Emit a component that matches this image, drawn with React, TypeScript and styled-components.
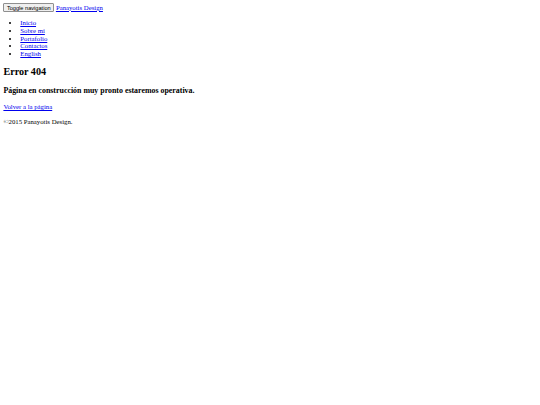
import styled, { createGlobalStyle } from 'styled-components';

// The reference is the unstyled page photographed at ~0.42 scale,
// so every default size below is scaled down by that factor.
const GlobalStyle = createGlobalStyle`
  body {
    margin: 3.4px;
    background: #fff;
    color: #000;
    font-family: "Liberation Serif", "Times New Roman", serif;
    font-size: 6.75px;
    line-height: 7.76px;
  }
`;

const NavHeader = styled.div`
  display: flex;
  align-items: center;
  gap: 1.7px;
  height: 8.9px;
`;

const ToggleButton = styled.button`
  font-family: "Liberation Sans", Arial, sans-serif;
  font-size: 5.63px;
  line-height: 6.5px;
  padding: 0.4px 2.5px;
  margin: 0;
  border: 1px solid #8f8f8f;
  border-radius: 1px;
  background: #efefef;
  color: #000;
`;

const Link = styled.a`
  color: #0000ee;
  text-decoration: underline;
`;

const Menu = styled.ul`
  margin: 6.75px 0;
  padding-left: 16.9px;
  list-style: disc;
`;

const Title = styled.h2`
  font-size: 10.13px;
  line-height: 11.65px;
  font-weight: bold;
  margin: 8.4px 0;
`;

const Subtitle = styled.h3`
  font-size: 7.9px;
  line-height: 9.08px;
  font-weight: bold;
  margin: 7.9px 0;
`;

const Paragraph = styled.p`
  margin: 6.75px 0;
`;

const menuItems = ['Inicio', 'Sobre mí', 'Portafolio', 'Contactos', 'English'];

export default function App() {
  return (
    <>
      <GlobalStyle />
      <nav>
        <NavHeader>
          <ToggleButton type="button">Toggle navigation</ToggleButton>
          <Link href="#">Panayotis Design</Link>
        </NavHeader>
        <Menu>
          {menuItems.map((item) => (
            <li key={item}>
              <Link href="#">{item}</Link>
            </li>
          ))}
        </Menu>
      </nav>
      <main>
        <Title>Error 404</Title>
        <Subtitle>Página en construcción muy pronto estaremos operativa.</Subtitle>
        <Paragraph>
          <Link href="#">Volver a la página</Link>
        </Paragraph>
      </main>
      <footer>
        <Paragraph>©2015 Panayotis Design.</Paragraph>
      </footer>
    </>
  );
}
